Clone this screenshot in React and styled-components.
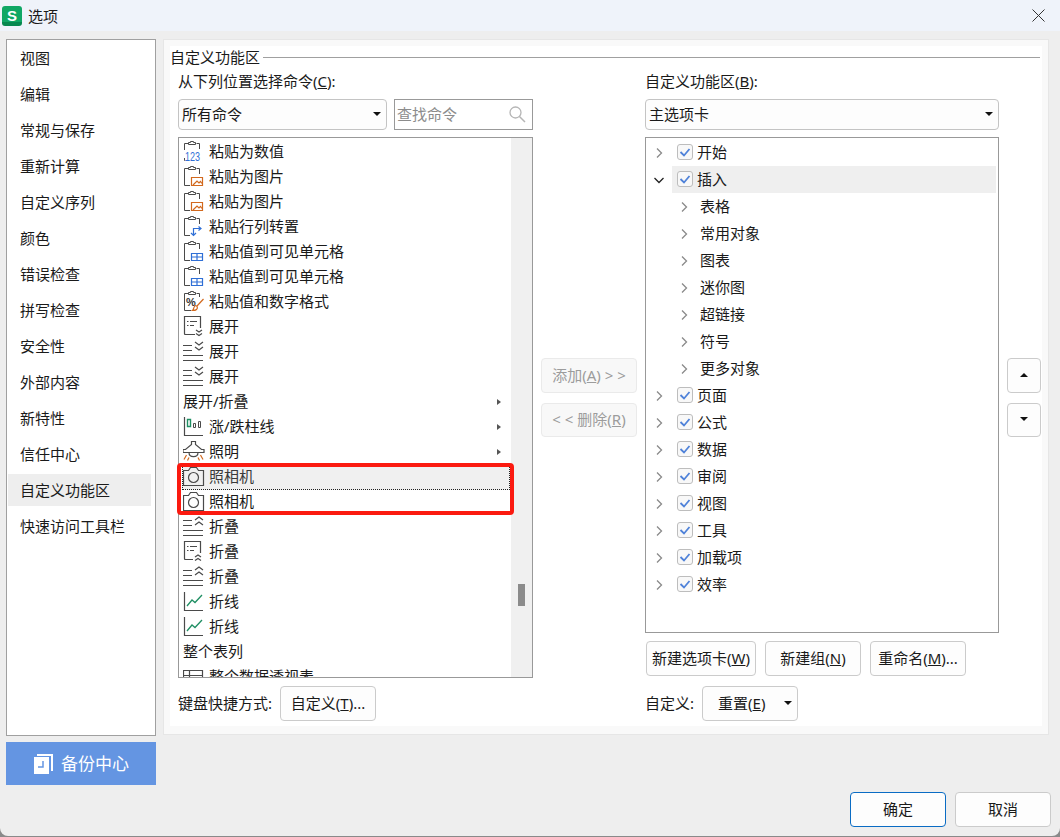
import styled, { createGlobalStyle } from "styled-components";

const Global = createGlobalStyle`
  html, body { margin: 0; padding: 0; background: #8a8a8a; }
  * { box-sizing: border-box; }
`;

const FONT = `"Noto Sans", "Noto Sans CJK SC", sans-serif`;

const Dialog = styled.div`
  width: 1060px;
  height: 836px;
  display: flex;
  flex-direction: column;
  background: #eeeeee;
  border-radius: 0 0 8px 8px;
  overflow: hidden;
  font-family: ${FONT};
  font-size: 15px;
  color: #1a1a1a;
  line-height: 20px;
`;

const TitleBar = styled.div`
  height: 31px;
  flex: none;
  display: flex;
  align-items: center;
  padding: 0 15px 0 2px;
  background: #eff3fa;
`;

const Logo = styled.div`
  width: 20px;
  height: 20px;
  margin-right: 6px;
  border-radius: 3px;
  background: linear-gradient(#10a765 80%, #07884f 80%);
  color: #fff;
  font: bold 15px/20px "Liberation Sans", sans-serif;
  text-align: center;
`;

const TitleText = styled.span`
  flex: 1;
`;

const Body = styled.div`
  display: flex;
  gap: 7px;
  height: 754px;
  flex: none;
  padding: 8px 11px 0 6px;
`;

const SideColumn = styled.div`
  width: 150px;
  display: flex;
  flex-direction: column;
  gap: 6px;
`;

const SideNav = styled.div`
  height: 697px;
  flex: none;
  background: #fff;
  border: 1px solid #a0a0a0;
  padding: 0 4px 0 1px;
`;

const SideItem = styled.div`
  height: 36px;
  padding-left: 12px;
  display: flex;
  align-items: center;
  background: ${(p) => (p.$active ? "linear-gradient(transparent 2px, #eeeeee 2px, #eeeeee 34px, transparent 34px)" : "transparent")};
`;

const BackupButton = styled.div`
  height: 43px;
  flex: none;
  background: #6495e2;
  color: #fff;
  font-size: 17px;
  display: flex;
  align-items: center;
  padding-left: 28px;
  gap: 8px;
`;

const Panel = styled.div`
  width: 886px;
  height: 696px;
  border: 1px solid #e6e6e6;
  background: #f9f9f9;
  padding: 6px;
`;

const PanelInner = styled.div`
  height: 680px;
  background: #fff;
`;

const Legend = styled.div`
  height: 22px;
  margin-bottom: 4px;
  padding: 0 2px 0 0;
  display: flex;
  align-items: center;
  gap: 3px;
  &::after {
    content: "";
    flex: 1;
    height: 1px;
    background: #a0a0a0;
  }
`;

const Columns = styled.div`
  display: grid;
  grid-template-columns: 355px 96px 354px 34px;
  column-gap: 8px;
  padding-left: 8px;
`;

const Column = styled.div`
  display: flex;
  flex-direction: column;
`;

const FieldLabel = styled.div`
  height: 20px;
  margin-bottom: 8px;
  margin-top: -1px;
`;

const ControlRow = styled.div`
  display: flex;
  gap: 7px;
  height: 31px;
  margin-bottom: 7px;
`;

const Select = styled.div`
  flex: 1;
  display: flex;
  align-items: center;
  justify-content: space-between;
  padding: 0 5px 2px 3px;
  background: #fdfdfd;
  border: 1px solid #c4c4c4;
  border-radius: 4px;
`;

const Caret = styled.span`
  width: 0;
  height: 0;
  border-left: 4px solid transparent;
  border-right: 4px solid transparent;
  border-top: 4px solid #111;
`;

const SearchBox = styled.div`
  width: 139px;
  flex: none;
  display: flex;
  align-items: center;
  justify-content: space-between;
  padding: 0 6px 2px 2px;
  border: 1px solid #999;
  color: #8c8c8c;
`;

const ListBox = styled.div`
  position: relative;
  height: 541px;
  display: flex;
  border: 1px solid #999;
  background: #fff;
`;

const ListRows = styled.div`
  flex: 1;
  overflow: hidden;
  padding-top: 2px;
`;

const Row = styled.div`
  position: relative;
  height: 25px;
  display: flex;
  align-items: center;
  gap: 4px;
  padding: 0 0 4px ${(p) => (p.$focus ? "1px" : "4px")};
  background: ${(p) => (p.$focus ? "#f0f0f0" : "transparent")};
  color: ${(p) => (p.$focus ? "#3a3a3a" : "inherit")};
  outline: ${(p) => (p.$focus ? "1px dotted #222" : "none")};
  outline-offset: -1px;
  margin-left: ${(p) => (p.$focus ? "3px" : "0")};
  margin-right: ${(p) => (p.$focus ? "1px" : "0")};
`;

const SubArrow = styled.span`
  position: absolute;
  right: 10px;
  top: 9px;
  width: 0;
  height: 0;
  border-top: 3px solid transparent;
  border-bottom: 3px solid transparent;
  border-left: 4px solid #555;
`;

const Scrollbar = styled.div`
  width: 21px;
  flex: none;
  background: #f0f0f0;
  padding: 446px 0 0 7px;
`;

const Thumb = styled.div`
  width: 7px;
  height: 22px;
  background: #8b8b8b;
`;

const Annotation = styled.div`
  position: absolute;
  left: -2px;
  top: 325px;
  width: 337px;
  height: 52px;
  border: 4px solid #fb1a10;
  border-radius: 4px;
  pointer-events: none;
`;

const BottomRow = styled.div`
  display: flex;
  align-items: center;
  gap: ${(p) => p.$gap || 8}px;
  margin-top: ${(p) => p.$top || 8}px;
  margin-left: ${(p) => p.$left || 0}px;
`;

const BottomLabel = styled.span`
  margin-bottom: 2px;
`;

const Button = styled.div`
  width: ${(p) => p.$w || 96}px;
  height: ${(p) => p.$h || 35}px;
  display: flex;
  align-items: center;
  justify-content: center;
  flex: none;
  padding-bottom: 2px;
  border-radius: 4px;
  background: ${(p) => (p.$off ? "#f8f8f8" : "#fdfdfd")};
  border: 1px solid ${(p) => (p.$primary ? "#0a6cc4" : p.$off ? "#eaeaea" : "#cbcbcb")};
  color: ${(p) => (p.$off ? "#9c9c9c" : "inherit")};
`;

const DropButton = styled(Button)`
  justify-content: flex-start;
  gap: 19px;
  padding-left: 15px;
`;

const SideButtons = styled.div`
  display: flex;
  flex-direction: column;
  gap: 10px;
  padding-top: 286px;
`;

const TreeBox = styled.div`
  height: 496px;
  border: 1px solid #999;
  background: #fff;
  padding-top: 1px;
`;

const TreeRow = styled.div`
  height: 27px;
  display: flex;
  align-items: center;
  padding-left: ${(p) => (p.$child ? 31 : 6)}px;
`;

const TreeBody = styled.div`
  flex: 1;
  height: 100%;
  margin: 0 2px 0 ${(p) => (p.$child ? 4 : 6)}px;
  padding: 0 0 2px 5px;
  display: flex;
  align-items: center;
  gap: 4px;
  background: ${(p) => (p.$active ? "#efefef" : "transparent")};
`;

const Check = styled.span`
  width: 16px;
  height: 16px;
  flex: none;
  display: flex;
  align-items: center;
  justify-content: center;
  border: 1px solid #bdbdbd;
  border-radius: 3px;
  background: #f8f8f8;
`;

const Footer = styled.div`
  display: flex;
  justify-content: flex-end;
  gap: 9px;
  padding: 7px 9px 0 0;
`;

const ic = { width: 22, height: 22, viewBox: "0 0 22 22", fill: "none", style: { flex: "none" } };
const G = "#4a4a4a";
const B = "#2f6fd6";
const O = "#d2691e";

const Clip = () => (
  <path d="M5.5 3.5H1.5V20.5H7M13.5 3.5H16.5V9M5.5 4.5V2.5H7.5V1.5H10.5V2.5H12.5V4.5Z" stroke={G} />
);

const icons = {
  num: (
    <svg {...ic}>
      <path d="M5.5 3.5H1.5V10M1.5 18V20.5H2.5M13.5 3.5H16.5V9M5.5 4.5V2.5H7.5V1.5H10.5V2.5H12.5V4.5Z" stroke={G} />
      <text x="2" y="21" fontSize="12" textLength="15" lengthAdjust="spacingAndGlyphs" fill={B} fontFamily="Liberation Sans">123</text>
    </svg>
  ),
  pic: (
    <svg {...ic}>
      <Clip />
      <path d="M8.5 12.5H19.5V20.5H8.5Z" stroke={O} strokeWidth="1.2" />
      <path d="M10 20L14 16L16 18L17.5 16.5L19 18.5" stroke={O} strokeWidth="1.2" />
    </svg>
  ),
  swap: (
    <svg {...ic}>
      <Clip />
      <path d="M10.5 20V13.5H17.5M15.5 11.5L18 13.5L15.5 15.5M8 18L10.5 20.5L13 18" stroke={B} strokeWidth="1.2" />
    </svg>
  ),
  grid: (
    <svg {...ic}>
      <Clip />
      <path d="M8.5 13.5H19.5V20.5H8.5ZM8.5 17H19.5M14 13.5V20.5" stroke={B} strokeWidth="1.2" />
    </svg>
  ),
  fmt: (
    <svg {...ic}>
      <path d="M5.5 3.5H1.5V20.5H8M13.5 3.5H16.5V7M5.5 4.5V2.5H7.5V1.5H10.5V2.5H12.5V4.5Z" stroke={G} />
      <text x="3" y="15.5" fontSize="11" fontWeight="bold" fill="#333" fontFamily="Liberation Sans">%</text>
      <path d="M20.5 9L14 16M12.5 15.5C14.5 16 15 18 13.5 19.5C12.5 20.5 10.5 20.5 9.5 20.5C11 19.5 10.5 16 12.5 15.5Z" stroke={O} strokeWidth="1.2" />
    </svg>
  ),
  docDown: (
    <svg {...ic}>
      <path d="M12 19.5H2.5Q1.5 19.5 1.5 18.5V1.5H17.5V13" stroke={G} strokeWidth="1.2" />
      <path d="M4 6.5H5.5M7 6.5H14M4 10.5H5.5M7 10.5H11" stroke={G} />
      <path d="M13 15L16 17L19 15M13 18.5L16 20.5L19 18.5" stroke={G} strokeWidth="1.2" />
    </svg>
  ),
  docUp: (
    <svg {...ic}>
      <path d="M10 19.5H2.5Q1.5 19.5 1.5 18.5V1.5H17.5V13" stroke={G} strokeWidth="1.2" />
      <path d="M4 6.5H5.5M7 6.5H14M4 10.5H5.5M7 10.5H11" stroke={G} />
      <path d="M12 17L15 15L18 17M12 20.5L15 18.5L18 20.5" stroke={G} strokeWidth="1.2" />
    </svg>
  ),
  linesDown: (
    <svg {...ic}>
      <path d="M0 5.5H9M0 10.5H9M0 15.5H20M0 20.5H20" stroke={G} strokeWidth="1.2" />
      <path d="M12 2L16 5L20 2M12 7L16 10L20 7" stroke={G} strokeWidth="1.2" />
    </svg>
  ),
  linesUp: (
    <svg {...ic}>
      <path d="M0 5.5H9M0 10.5H9M0 15.5H20M0 20.5H20" stroke={G} strokeWidth="1.2" />
      <path d="M12 5L16 2L20 5M12 10L16 7L20 10" stroke={G} strokeWidth="1.2" />
    </svg>
  ),
  bars: (
    <svg {...ic}>
      <path d="M1.5 2V20.5H20" stroke={G} strokeWidth="1.2" />
      <path d="M4.5 4.5H7.5V11.5H4.5Z" stroke="#1f8f63" strokeWidth="1.4" />
      <path d="M10.5 8.5H12.5V12.5H10.5ZM15.5 6.5H17.5V12.5H15.5Z" stroke={G} />
    </svg>
  ),
  lamp: (
    <svg {...ic}>
      <path d="M8.5 4.5V1.5H12.5V4.5L18.5 9.5H21V12.5H0V9.5H2.5Z" stroke={G} strokeWidth="1.2" />
      <path d="M6 12.5C6 18 15 18 15 12.5" stroke={G} strokeWidth="1.2" />
      <path d="M3.5 15L1 19.5M6 17.5L4.5 20.5M17.5 15L20 19.5M15 17.5L16.5 20.5" stroke={O} strokeWidth="1.2" />
    </svg>
  ),
  cam: (
    <svg {...ic}>
      <path d="M0.5 5.5H5.5L7.5 2.5H13.5L15.5 5.5H20.5V20.5H0.5Z" stroke={G} strokeWidth="1.2" />
      <circle cx="10.5" cy="12.5" r="5" stroke={G} strokeWidth="1.2" />
    </svg>
  ),
  line: (
    <svg {...ic}>
      <path d="M1.5 2V20.5H20" stroke={G} strokeWidth="1.2" />
      <path d="M4 16L9 10L12 12.5L19 5" stroke="#1f8f63" strokeWidth="1.3" />
    </svg>
  ),
  pivot: (
    <svg {...ic}>
      <path d="M0.5 5.5H19.5V24H0.5ZM0.5 10.5H19.5M6.5 5.5V24" stroke={G} strokeWidth="1.2" />
      <rect x="14" y="12" width="3" height="3" fill={B} />
    </svg>
  ),
};

const commands = [
  { icon: "num", text: "粘贴为数值" },
  { icon: "pic", text: "粘贴为图片" },
  { icon: "pic", text: "粘贴为图片" },
  { icon: "swap", text: "粘贴行列转置" },
  { icon: "grid", text: "粘贴值到可见单元格" },
  { icon: "grid", text: "粘贴值到可见单元格" },
  { icon: "fmt", text: "粘贴值和数字格式" },
  { icon: "docDown", text: "展开" },
  { icon: "linesDown", text: "展开" },
  { icon: "linesDown", text: "展开" },
  { text: "展开/折叠", sub: true },
  { icon: "bars", text: "涨/跌柱线", sub: true },
  { icon: "lamp", text: "照明", sub: true },
  { icon: "cam", text: "照相机", focus: true },
  { icon: "cam", text: "照相机" },
  { icon: "linesUp", text: "折叠" },
  { icon: "docUp", text: "折叠" },
  { icon: "linesUp", text: "折叠" },
  { icon: "line", text: "折线" },
  { icon: "line", text: "折线" },
  { text: "整个表列" },
  { icon: "pivot", text: "整个数据透视表" },
];

const tabs = [
  { text: "开始" },
  { text: "插入", open: true },
  { text: "表格", child: true },
  { text: "常用对象", child: true },
  { text: "图表", child: true },
  { text: "迷你图", child: true },
  { text: "超链接", child: true },
  { text: "符号", child: true },
  { text: "更多对象", child: true },
  { text: "页面" },
  { text: "公式" },
  { text: "数据" },
  { text: "审阅" },
  { text: "视图" },
  { text: "工具" },
  { text: "加载项" },
  { text: "效率" },
];

const sideItems = ["视图", "编辑", "常规与保存", "重新计算", "自定义序列", "颜色", "错误检查", "拼写检查", "安全性", "外部内容", "新特性", "信任中心", "自定义功能区", "快速访问工具栏"];

const Chevron = ({ open }) => (
  <svg width="14" height="14" viewBox="0 0 14 14" fill="none" style={{ flex: "none" }}>
    <path d={open ? "M2.5 5L7 9.5L11.5 5" : "M5 2.5L9.5 7L5 11.5"} stroke={open ? "#222" : "#8a8a8a"} strokeWidth="1.3" />
  </svg>
);

export default function App() {
  return (
    <>
      <Global />
      <Dialog>
        <TitleBar>
          <Logo>S</Logo>
          <TitleText>选项</TitleText>
          <svg width="13" height="13" viewBox="0 0 13 13" fill="none">
            <path d="M0.5 0.5L12.5 12.5M12.5 0.5L0.5 12.5" stroke="#333" />
          </svg>
        </TitleBar>
        <Body>
          <SideColumn>
            <SideNav>
              {sideItems.map((s) => (
                <SideItem key={s} $active={s === "自定义功能区"}>{s}</SideItem>
              ))}
            </SideNav>
            <BackupButton>
              <svg width="19" height="20" viewBox="0 0 19 20">
                <path d="M3 0H19V17H17V2H3Z" fill="#fff" />
                <path d="M0 3H15V20H0Z" fill="#fff" />
                <path d="M9 7V13H4" stroke="#6495e2" strokeWidth="1.5" fill="none" />
              </svg>
              备份中心
            </BackupButton>
          </SideColumn>
          <Panel>
            <PanelInner>
              <Legend>自定义功能区</Legend>
              <Columns>
                <Column>
                  <FieldLabel>从下列位置选择命令(<u>C</u>):</FieldLabel>
                  <ControlRow>
                    <Select>所有命令<Caret /></Select>
                    <SearchBox>
                      查找命令
                      <svg width="18" height="18" viewBox="0 0 18 18" fill="none">
                        <circle cx="7.5" cy="7.5" r="5.5" stroke="#b5b5b5" strokeWidth="1.3" />
                        <path d="M11.5 11.5L17 17" stroke="#b5b5b5" strokeWidth="1.5" />
                      </svg>
                    </SearchBox>
                  </ControlRow>
                  <ListBox>
                    <ListRows>
                      {commands.map((c, i) => (
                        <Row key={i} $focus={c.focus}>
                          {c.icon && icons[c.icon]}
                          {c.text}
                          {c.sub && <SubArrow />}
                        </Row>
                      ))}
                    </ListRows>
                    <Scrollbar><Thumb /></Scrollbar>
                    <Annotation />
                  </ListBox>
                  <BottomRow>
                    <BottomLabel>键盘快捷方式:</BottomLabel>
                    <Button>自定义(<u>T</u>)...</Button>
                  </BottomRow>
                </Column>
                <SideButtons>
                  <Button $off>添加(<u>A</u>)&nbsp;&gt;&nbsp;&gt;</Button>
                  <Button $off $h={34}>&lt;&nbsp;&lt;&nbsp;删除(<u>R</u>)</Button>
                </SideButtons>
                <Column>
                  <FieldLabel>自定义功能区(<u>B</u>):</FieldLabel>
                  <ControlRow>
                    <Select>主选项卡<Caret /></Select>
                  </ControlRow>
                  <TreeBox>
                    {tabs.map((t) => (
                      <TreeRow key={t.text + (t.child ? "c" : "")} $child={t.child}>
                        <Chevron open={t.open} />
                        <TreeBody $child={t.child} $active={t.open}>
                          {!t.child && (
                            <Check>
                              <svg width="12" height="12" viewBox="0 0 12 12" fill="none">
                                <path d="M1.5 6L5 9.5L10.5 3" stroke="#4f82d9" strokeWidth="1.8" />
                              </svg>
                            </Check>
                          )}
                          {t.text}
                        </TreeBody>
                      </TreeRow>
                    ))}
                  </TreeBox>
                  <BottomRow $left={1} $gap={9}>
                    <Button $w={110}>新建选项卡(<u>W</u>)</Button>
                    <Button>新建组(<u>N</u>)</Button>
                    <Button>重命名(<u>M</u>)...</Button>
                  </BottomRow>
                  <BottomRow $top={10}>
                    <BottomLabel>自定义:</BottomLabel>
                    <DropButton>
                      <span>重置(<u>E</u>)</span>
                      <Caret />
                    </DropButton>
                  </BottomRow>
                </Column>
                <SideButtons>
                  <Button $w={34}>
                    <svg width="8" height="4" viewBox="0 0 8 4"><path d="M4 0L8 4H0Z" fill="#111" /></svg>
                  </Button>
                  <Button $w={34} $h={34}>
                    <svg width="8" height="4" viewBox="0 0 8 4"><path d="M0 0H8L4 4Z" fill="#111" /></svg>
                  </Button>
                </SideButtons>
              </Columns>
            </PanelInner>
          </Panel>
        </Body>
        <Footer>
          <Button $primary>确定</Button>
          <Button>取消</Button>
        </Footer>
      </Dialog>
    </>
  );
}
